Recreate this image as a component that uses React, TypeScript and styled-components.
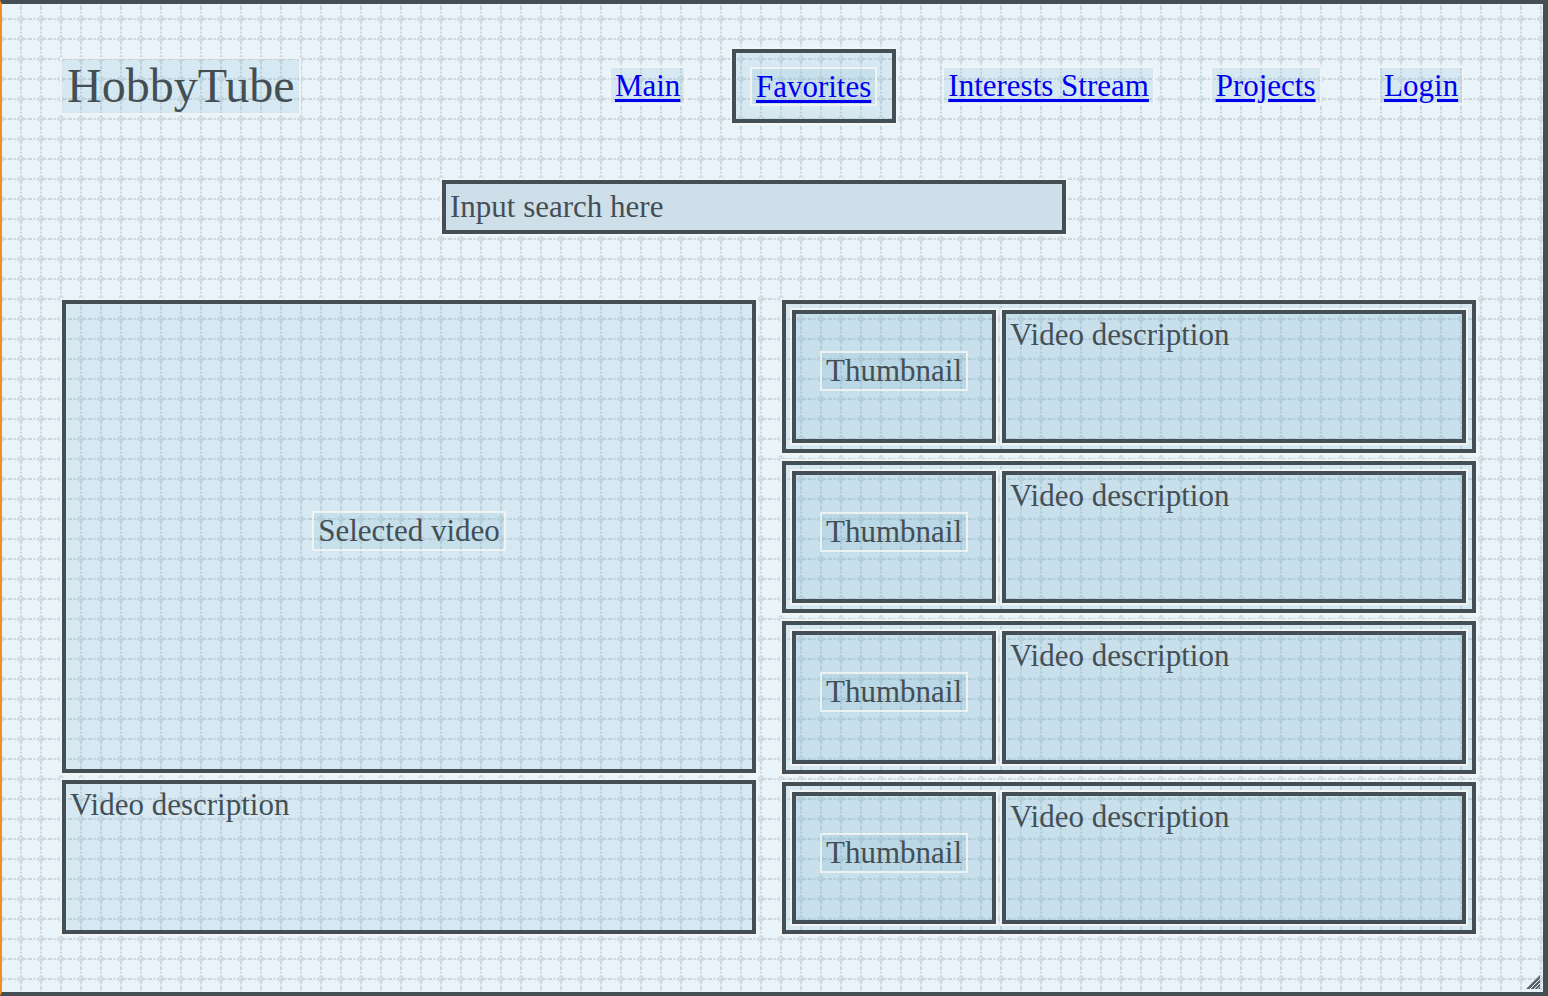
import React from "react";
import styled, { createGlobalStyle } from "styled-components";

const DARK = "#444f55";
const TINT = "rgba(112, 177, 203, 0.15)";
const LIGHT = "rgba(246, 246, 243, 0.85)";

const gridSvg =
    "<svg xmlns='http://www.w3.org/2000/svg' width='20' height='20' viewBox='0 0 20 20'>" +
    "<g fill='none' stroke='%23cbd7dd' stroke-width='2' stroke-dasharray='2 1.6'>" +
    "<path d='M0 11H20'/><path d='M11 0V20'/></g>" +
    "<path d='M11 7.8L14.2 11L11 14.2L7.8 11Z' fill='none' stroke='%23cbd7dd' stroke-width='1.2'/>" +
    "</svg>";

const GlobalStyle = createGlobalStyle`
    html, body {
        margin: 0;
        padding: 0;
        background: #e8f4fa;
    }
    * {
        box-sizing: border-box;
    }
`;

const Frame = styled.div`
    position: relative;
    width: 1548px;
    height: 996px;
    border-top: 4px solid ${DARK};
    border-right: 5px solid ${DARK};
    border-bottom: 4px solid ${DARK};
    border-left: 2px solid #f0901e;
    background-color: #e8f4fa;
    background-image: url("data:image/svg+xml,${gridSvg}");
    background-size: 20px 20px;
    background-origin: border-box;
    background-position: 10px 8px;
    font-family: "Liberation Serif", "Times New Roman", serif;
    color: ${DARK};
    overflow: hidden;
`;

const Header = styled.header`
    display: flex;
    align-items: center;
    height: 164px;
    padding-left: 58px;
`;

const Logo = styled.div`
    height: 58px;
    padding: 0 4px 0 5px;
    font-size: 48px;
    line-height: 54px;
    background: ${TINT};
    border: 2px solid ${LIGHT};
`;

const Nav = styled.nav`
    display: grid;
    grid-template-columns: 168px 164px 306px 128px 183px;
    align-items: center;
    justify-items: center;
    margin-left: 263px;
    margin-top: -2px;
`;

const NavItem = styled.div<{ $active?: boolean }>`
    display: flex;
    align-items: center;
    justify-content: center;
    ${({ $active }) =>
        $active &&
        `
        width: 164px;
        height: 74px;
        margin-top: 2px;
        border: 4px solid ${DARK};
        background: ${TINT};
        box-shadow: 0 0 0 2px ${LIGHT};
    `}
`;

const NavLink = styled.a`
    display: inline-block;
    padding: 0 4px;
    font-size: 31px;
    line-height: 35px;
    color: #0000ee;
    text-decoration: underline;
    text-underline-offset: 3px;
    background: ${TINT};
    border: 2px solid ${LIGHT};
    cursor: pointer;
`;

const SearchInput = styled.input`
    display: block;
    margin: 12px 0 0 440px;
    width: 624px;
    height: 54px;
    padding: 0 4px;
    border: 4px solid ${DARK};
    background: #cfdfea;
    box-shadow: 0 0 0 2px ${LIGHT};
    font-family: "Liberation Serif", "Times New Roman", serif;
    font-size: 31px;
    color: ${DARK};
    outline: none;

    &::placeholder {
        color: ${DARK};
        opacity: 1;
    }
`;

const Main = styled.main`
    display: flex;
    gap: 26px;
    margin: 66px 0 0 60px;
    height: 634px;
`;

const Column = styled.div<{ $gap: number }>`
    display: flex;
    flex-direction: column;
    gap: ${({ $gap }) => `${$gap}px`};
    width: 694px;
`;

const SelectedBox = styled.div`
    flex: 1;
    display: flex;
    align-items: center;
    justify-content: center;
    padding-bottom: 12px;
    border: 4px solid ${DARK};
    background: ${TINT};
    box-shadow: 0 0 0 2px ${LIGHT};
`;

const Label = styled.span`
    padding: 0 4px;
    font-size: 31px;
    line-height: 36px;
    background: ${TINT};
    border: 2px solid ${LIGHT};
`;

const Description = styled.div<{ $height?: number }>`
    ${({ $height }) => ($height ? `height: ${$height}px;` : "flex: 1;")}
    padding: 3px 4px;
    font-size: 31px;
    line-height: 35px;
    border: 4px solid ${DARK};
    background: ${TINT};
    box-shadow: 0 0 0 2px ${LIGHT};
`;

const VideoRow = styled.div`
    flex: 1;
    display: flex;
    gap: 6px;
    padding: 6px;
    border: 4px solid ${DARK};
    background: ${TINT};
    box-shadow: 0 0 0 2px ${LIGHT};
`;

const Thumbnail = styled.div`
    width: 204px;
    display: flex;
    align-items: center;
    justify-content: center;
    padding-bottom: 10px;
    border: 4px solid ${DARK};
    background: ${TINT};
    box-shadow: 0 0 0 2px ${LIGHT};
`;

const ResizeHandle = styled.svg`
    position: absolute;
    right: 3px;
    bottom: 3px;
`;

const navItems = ["Main", "Favorites", "Interests Stream", "Projects", "Login"];

const App: React.FC = () => {
    return (
        <>
            <GlobalStyle />
            <Frame>
                <Header>
                    <Logo>HobbyTube</Logo>
                    <Nav>
                        {navItems.map((item) => (
                            <NavItem key={item} $active={item === "Favorites"}>
                                <NavLink>{item}</NavLink>
                            </NavItem>
                        ))}
                    </Nav>
                </Header>

                <SearchInput placeholder="Input search here" />

                <Main>
                    <Column $gap={7}>
                        <SelectedBox>
                            <Label>Selected video</Label>
                        </SelectedBox>
                        <Description $height={154}>Video description</Description>
                    </Column>
                    <Column $gap={8}>
                        {[0, 1, 2, 3].map((i) => (
                            <VideoRow key={i}>
                                <Thumbnail>
                                    <Label>Thumbnail</Label>
                                </Thumbnail>
                                <Description>Video description</Description>
                            </VideoRow>
                        ))}
                    </Column>
                </Main>

                <ResizeHandle width="14" height="14" viewBox="0 0 14 14">
                    <path d="M14 0L14 14L0 14Z" fill="#5a6368" />
                    <g stroke="#e8f4fa" strokeWidth="1">
                        <path d="M4 14L14 4" />
                        <path d="M8 14L14 8" />
                        <path d="M11.5 14L14 11.5" />
                    </g>
                </ResizeHandle>
            </Frame>
        </>
    );
};

export default App;
